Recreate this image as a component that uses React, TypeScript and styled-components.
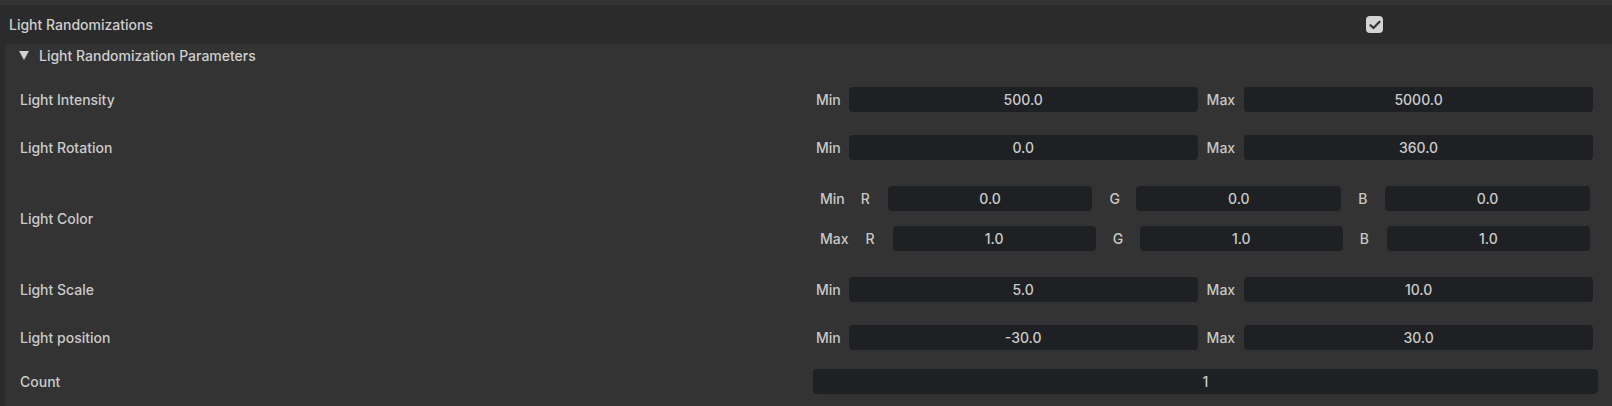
import React from "react";
import styled, { createGlobalStyle } from "styled-components";

const Global = createGlobalStyle`
  html, body { margin: 0; padding: 0; background: #2b2b2b; }
  body { font-family: Inter, Roboto, "Noto Sans", "Liberation Sans", sans-serif; font-size: 14px; font-weight: 500; color: #cbcbcb; }
  * { box-sizing: border-box; }
`;

const Page = styled.div`
  width: 1612px;
  height: 406px;
  background: #2b2b2b;
  border-top: 5px solid #343434;
  display: flex;
  flex-direction: column;
  overflow: hidden;
`;

const HeaderRow = styled.div`
  height: 39px;
  display: flex;
  align-items: center;
  padding-left: 9px;
  padding-right: 229px;
`;

const HeaderTitle = styled.div`
  flex: 1;
  color: #cfcfcf;
  margin-top: -1px;
`;

const Checkbox = styled.div`
  width: 17px;
  height: 17px;
  border-radius: 4px;
  background: #d4d4d4;
  display: flex;
  align-items: center;
  justify-content: center;
`;

const Panel = styled.div`
  flex: 1;
  margin-left: 5px;
  background: #333333;
  display: flex;
  flex-direction: column;
`;

const CollapseHeader = styled.div`
  height: 22px;
  display: flex;
  align-items: center;
  padding-left: 14px;
  gap: 10px;
  color: #cfcfcf;
`;

const Triangle = styled.span`
  width: 0;
  height: 0;
  border-left: 5px solid transparent;
  border-right: 5px solid transparent;
  border-top: 9px solid #d0d0d0;
  margin-top: 1px;
`;

const Rows = styled.div`
  padding-top: 9px;
  display: flex;
  flex-direction: column;
`;

const Row = styled.div<{ $h: number }>`
  height: ${(p) => p.$h}px;
  flex: none;
  display: flex;
  align-items: center;
  padding-left: 15px;
`;

const RowLabel = styled.div`
  width: 793px;
  color: #cbcbcb;
`;

const Value = styled.div`
  width: 785px;
  display: flex;
  flex-direction: column;
  gap: 15px;
`;

const RangeLine = styled.div`
  display: flex;
  align-items: center;
  padding: 0 5px 0 3px;
`;

const SmallLabel = styled.span<{ $gap: number }>`
  margin-right: ${(p) => p.$gap}px;
  color: #c8c8c8;
  white-space: nowrap;
`;

const Field = styled.div<{ $after?: number }>`
  flex: 1 1 0;
  height: 25px;
  border-radius: 4px;
  background: #1f2023;
  display: flex;
  align-items: center;
  justify-content: center;
  color: #cbcbcb;
  margin-right: ${(p) => p.$after ?? 0}px;
`;

const WideField = styled(Field)`
  flex: none;
  width: 100%;
`;

const ColorLine = styled.div`
  display: flex;
  align-items: center;
  padding: 0 8px 0 7px;
`;

const Channel = styled.span`
  width: 9px;
  margin-right: 18px;
  color: #c8c8c8;
`;

const Range = ({ label, min, max }: { label: string; min: string; max: string }) => (
  <Row $h={48}>
    <RowLabel>{label}</RowLabel>
    <Value>
      <RangeLine>
        <SmallLabel $gap={8}>Min</SmallLabel>
        <Field $after={9}>{min}</Field>
        <SmallLabel $gap={9}>Max</SmallLabel>
        <Field>{max}</Field>
      </RangeLine>
    </Value>
  </Row>
);

const ColorRow = ({ tag, v, pad }: { tag: string; v: string; pad: number }) => (
  <ColorLine>
    <SmallLabel $gap={pad}>{tag}</SmallLabel>
    <Channel>R</Channel>
    <Field $after={17}>{v}</Field>
    <Channel>G</Channel>
    <Field $after={17}>{v}</Field>
    <Channel>B</Channel>
    <Field>{v}</Field>
  </ColorLine>
);

export default function App() {
  return (
    <>
      <Global />
      <Page>
        <HeaderRow>
          <HeaderTitle>Light Randomizations</HeaderTitle>
          <Checkbox>
            <svg width="12" height="10" viewBox="0 0 12 10">
              <path d="M1.5 5.2 L4.5 8 L10.5 1.8" fill="none" stroke="#333" strokeWidth="2.2" strokeLinecap="round" strokeLinejoin="round" />
            </svg>
          </Checkbox>
        </HeaderRow>
        <Panel>
          <CollapseHeader>
            <Triangle />
            <span>Light Randomization Parameters</span>
          </CollapseHeader>
          <Rows>
            <Range label="Light Intensity" min="500.0" max="5000.0" />
            <Range label="Light Rotation" min="0.0" max="360.0" />
            <Row $h={94}>
              <RowLabel>Light Color</RowLabel>
              <Value>
                <ColorRow tag="Min" v="0.0" pad={16} />
                <ColorRow tag="Max" v="1.0" pad={17} />
              </Value>
            </Row>
            <Range label="Light Scale" min="5.0" max="10.0" />
            <Range label="Light position" min="-30.0" max="30.0" />
            <Row $h={40}>
              <RowLabel>Count</RowLabel>
              <Value>
                <WideField>1</WideField>
              </Value>
            </Row>
          </Rows>
        </Panel>
      </Page>
    </>
  );
}
